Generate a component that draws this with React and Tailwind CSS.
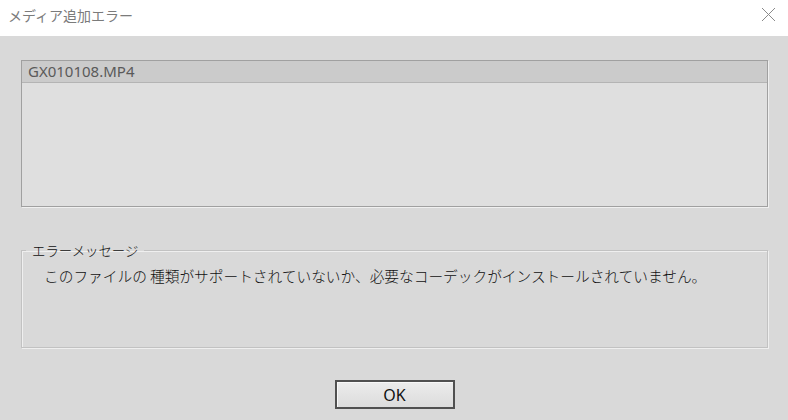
import React from "react";

export default function App() {
  const jp = { fontFamily: '"Noto Sans CJK JP", "Noto Sans", sans-serif' };
  return (
    <div className="w-[788px] h-[420px] flex flex-col bg-[#d9d9d9] overflow-hidden" style={jp}>
      <div className="h-[36px] bg-white flex items-center justify-between pl-[8px] pr-[12px] shrink-0">
        <span className="text-[14px] text-[#7b7b7b] leading-none -mt-[7px]">メディア追加エラー</span>
        <svg width="15" height="15" viewBox="0 0 15 15" className="-mt-[7px]">
          <path d="M1 1 L14 14 M14 1 L1 14" stroke="#8a8a8a" strokeWidth="1" />
        </svg>
      </div>
      <div className="flex flex-col px-[21px] pr-[20px]">
        <div className="mt-[24px] h-[147px] border border-[#a0a0a0] bg-[#dfdfdf] shadow-[1px_1px_0_#f0f0f0] flex flex-col">
          <div className="h-[22px] bg-[#cbcbcb] border-b border-[#b4b4b4] flex items-center pl-[6px]">
            <span className="text-[15px] text-[#5a5a5a] leading-none" style={{ fontFamily: '"Noto Sans", sans-serif' }}>GX010108.MP4</span>
          </div>
        </div>
        <fieldset className="mt-[36px] h-[105px] border border-[#c2c2c2] shadow-[1px_1px_0_#efefef,inset_1px_1px_0_#efefef]">
          <legend className="ml-[4px] px-[6px] text-[13.4px] text-[#111] leading-[14px] font-light">エラーメッセージ</legend>
          <div className="mt-[12px] ml-[22px] text-[14.7px] text-[#111] leading-none font-light">このファイルの 種類がサポートされていないか、必要なコーデックがインストールされていません。</div>
        </fieldset>
        <div className="flex justify-center mt-[32px]">
          <button className="w-[120px] h-[29px] border-2 border-[#505050] bg-gradient-to-b from-[#ececec] to-[#dcdcdc] shadow-[inset_1px_1px_0_#f8f8f8] text-[16px] text-[#111] flex items-center justify-center" style={{ fontFamily: '"Noto Sans", sans-serif' }}>
            OK
          </button>
        </div>
      </div>
    </div>
  );
}
